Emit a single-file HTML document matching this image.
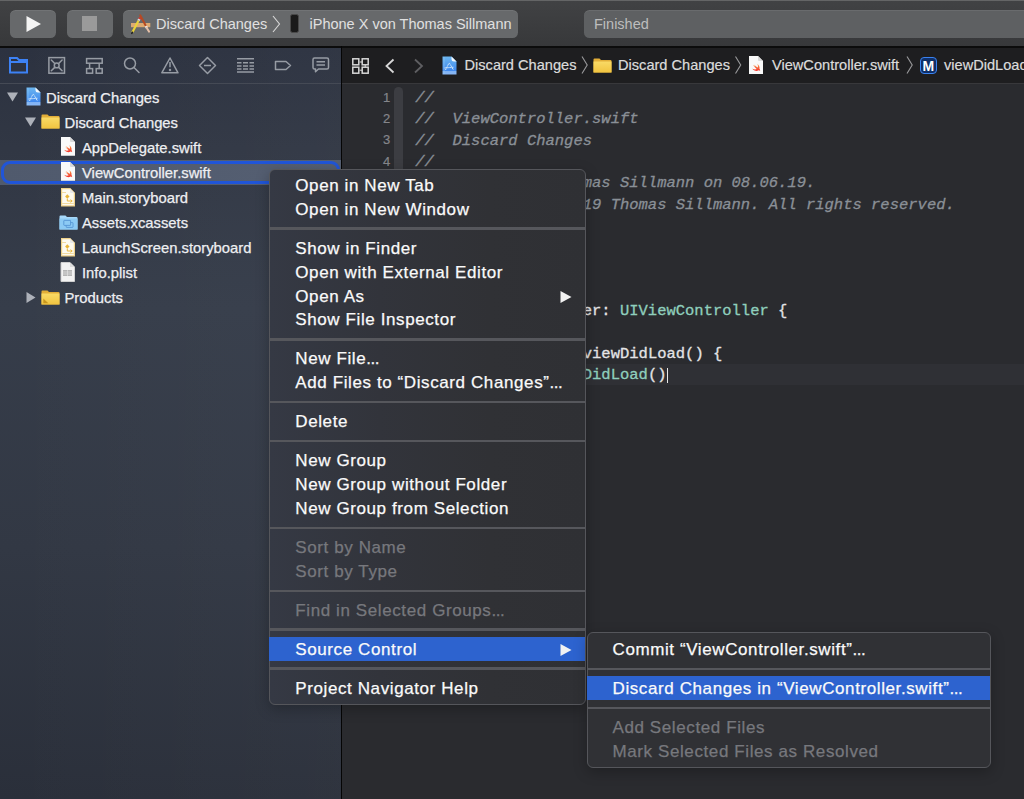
<!DOCTYPE html>
<html><head><meta charset="utf-8">
<style>
*{margin:0;padding:0;box-sizing:border-box}
html,body{width:1024px;height:799px;overflow:hidden;background:#2a2b2f;font-family:"Liberation Sans",sans-serif}
.abs{position:absolute}
#toolbar{left:0;top:0;width:1024px;height:47px;background:linear-gradient(#414244,#37383a)}
#toolbar .topline{left:0;top:0;width:1024px;height:1px;background:#646566}
#tbborder{left:0;top:46.4px;width:1024px;height:1.6px;background:#0c0c0c}
.btn{background:#67696b;border-radius:5.5px;box-shadow:inset 0 1px 0 rgba(255,255,255,0.07)}
#sidebar{left:0;top:48px;width:341px;height:751px;background:linear-gradient(90deg,rgba(255,255,255,0),rgba(255,255,255,0.025)),linear-gradient(180deg,#2c3240 0px,#313744 100px,#363d4a 260px,#323844 500px,#2a2f3a 751px)}
#sbsep{left:0;top:83px;width:341px;height:1px;background:#454a55}
#vsep{left:341px;top:46px;width:1.4px;height:753px;background:#050505}
#jumpbar{left:342px;top:48px;width:682px;height:35px;background:#1e1e20}
#jbsep{left:342px;top:83px;width:682px;height:1px;background:#38383b}
#editor{left:342px;top:84px;width:682px;height:715px;background:#2a2b2f}
.row{position:absolute;height:25px;font-size:14.8px;color:#eeeff2;line-height:25px;white-space:nowrap;margin-top:1.7px;-webkit-text-stroke:0.25px #eeeff2}
.tb{font-size:14.5px;color:#e0e0e0;white-space:nowrap;position:absolute;line-height:20px;margin-top:0.7px}
.code{position:absolute;font-family:"Liberation Mono",monospace;font-size:15.5px;white-space:pre;line-height:21px}
.cm{color:#8a9097;font-style:italic}
.ln{position:absolute;font-family:"Liberation Sans",sans-serif;font-size:13px;color:#85868b;line-height:21px;text-align:right;width:30px;-webkit-text-stroke:0.2px #85868b}
.menu{position:absolute;background:#313338;border:1px solid #55565b;border-radius:6px;box-shadow:0 4px 14px rgba(0,0,0,.25)}
.mi{position:absolute;-webkit-text-stroke:0.25px currentColor;height:24px;font-size:17px;letter-spacing:.6px;color:#fafafa;line-height:24px;white-space:nowrap;padding-left:26.3px;padding-top:0.5px}
.mi.dis{color:#77787d}
.mi.hl{background:#2d63cf}
.msep{position:absolute;height:2.4px;background:#56575c}
.jb{position:absolute;top:55px;font-size:14.6px;line-height:20px;color:#dcdcdc;white-space:nowrap;margin-top:0.4px;-webkit-text-stroke:0.2px #dcdcdc}
.code{color:#e4e4e6;-webkit-text-stroke:0.3px currentColor}
.kw{color:#fc5fa3;font-weight:bold}
.ty{color:#8fcfbd}
</style></head><body><svg width="0" height="0" style="position:absolute"><defs><linearGradient id="fold" x1="0" y1="0" x2="0" y2="1"><stop offset="0" stop-color="#f9da66"/><stop offset="1" stop-color="#f1c440"/></linearGradient></defs></svg>
<div id="toolbar" class="abs"><div class="topline abs"></div></div>
<div id="tbborder" class="abs"></div>
<div class="abs btn" style="left:10px;top:10px;width:46px;height:27.5px"></div>
<svg class="abs" style="left:25px;top:15px" width="18" height="18" viewBox="0 0 18 18"><path d="M1.5 1 L16 9 L1.5 17 Z" fill="#f4f4f4"/></svg>
<div class="abs btn" style="left:67px;top:10px;width:46px;height:27.5px"></div>
<div class="abs" style="left:82px;top:16px;width:15px;height:15px;background:#9a9a9a"></div>
<div class="abs btn" style="left:123px;top:10px;width:395px;height:27.5px"></div>
<svg class="abs" style="left:126px;top:10px" width="30" height="27" viewBox="0 0 30 27">
 <rect x="5" y="13" width="19.3" height="4.2" fill="#dcaa72"/>
 <path d="M14.2 5.3 L19.9 16" stroke="#b54a22" stroke-width="2.0" stroke-linecap="round"/>
 <path d="M19.9 16 L20.8 17.9" stroke="#e8e8e8" stroke-width="2.4"/>
 <path d="M20.8 17.9 L23 21.6" stroke="#e6c0a8" stroke-width="2.0" stroke-linecap="round"/>
 <path d="M6.4 22.3 L12.6 10.5" stroke="#e9d23a" stroke-width="2.2"/>
 <path d="M12.6 10.5 L13.4 9" stroke="#dcdcdc" stroke-width="2.6"/>
 <path d="M13.4 9 L14.2 7.6" stroke="#d9342a" stroke-width="2.6"/>
 <path d="M6.4 22.3 L5.8 23.3" stroke="#222" stroke-width="1.6" stroke-linecap="round"/>
</svg>
<div class="tb" style="left:156px;top:13px">Discard Changes</div>
<svg class="abs" style="left:272px;top:15px" width="9" height="18" viewBox="0 0 9 18"><path d="M1 1 L7.5 9 L1 17" fill="none" stroke="#d8d8d8" stroke-width="1.1"/></svg>
<div class="abs" style="left:289.8px;top:14.4px;width:9px;height:18.6px;background:#1a1a1a;border:1px solid #4a4a4a;border-radius:2.5px"></div>
<div class="tb" style="left:309.5px;top:13px">iPhone X von Thomas Sillmann</div>
<div class="abs btn" style="left:584px;top:10px;width:460px;height:27.5px;background:#5e6062"></div>
<div class="tb" style="left:594px;top:13px;color:#bdbdbd">Finished</div>

<div id="sidebar" class="abs"></div>
<div id="sbsep" class="abs"></div>

<svg class="abs" style="left:0;top:48px" width="341" height="35" viewBox="0 48 341 35">
 <g fill="none" stroke="#3d82f5" stroke-width="2">
  <path d="M10 58 H17 L19 60 H27 V72.5 H10 Z"/><path d="M10 62 H27"/>
 </g>
 <g fill="none" stroke="#979ca4" stroke-width="1.5">
  <rect x="48.9" y="57.6" width="15.6" height="15.6"/>
  <circle cx="56.7" cy="65.4" r="2.4"/>
  <path d="M51.3 60 L54.5 63.2 M62.1 60 L58.9 63.2 M51.3 70.8 L54.5 67.6 M62.1 70.8 L58.9 67.6" stroke-linecap="round"/>
  <rect x="86.6" y="58.6" width="15.6" height="4.6"/>
  <rect x="86.6" y="68.6" width="6" height="4.6"/><rect x="96.2" y="68.6" width="6" height="4.6"/>
  <path d="M89.6 63.2 V68.6 M99.2 63.2 V68.6"/>
  <circle cx="130" cy="63.5" r="5.5"/><path d="M134 67.5 L139 72.5" stroke-linecap="round"/>
  <path d="M170 58 L178 72.8 H161.8 Z" stroke-linejoin="round"/>
  <path d="M170 62 V67.3"/><circle cx="170" cy="70" r="0.5" fill="#979ca4"/>
  <path d="M207.5 57.5 L215.5 65.5 L207.5 73.5 L199.5 65.5 Z" stroke-linejoin="round"/>
  <path d="M204 65.5 H211"/>
  <path d="M237 58.8 H254 M237 72 H254 M237 62.8 H241.5 M243 62.8 H248 M249.5 62.8 H254 M237 66 H241.5 M243 66 H248 M249.5 66 H254 M237 69 H241.5 M243 69 H248 M249.5 69 H254"/>
  <path d="M275.5 61.5 H286 L290.5 65.5 L286 69.5 H275.5 Z" stroke-linejoin="round"/>
  <path d="M314.5 58 H327 Q328.5 58 328.5 59.5 V67.5 Q328.5 69 327 69 H318.5 L315.5 71.8 V69 H314.5 Q313 69 313 67.5 V59.5 Q313 58 314.5 58 Z" stroke-linejoin="round"/>
  <path d="M316.5 61.8 H325 M316.5 65 H325"/>
 </g>
</svg>
<div class="abs" style="left:0;top:159.8px;width:341px;height:25px;background:linear-gradient(90deg,#505a6d,#555f72)"></div><div class="abs" style="left:1.2px;top:161px;width:339px;height:23px;border:3px solid #2055d8;border-radius:9px"></div><svg class="abs" style="left:7px;top:92.2px" width="11" height="10" viewBox="0 0 11 10"><path d="M0 0.5 H11 L5.5 9.5 Z" fill="#adb1b9"/></svg><svg class="abs" style="left:25.5px;top:87px" width="15" height="19" viewBox="0 0 15 19">
 <defs><linearGradient id="pg26" x1="0" y1="0" x2="0" y2="1"><stop offset="0" stop-color="#6cb6f0"/><stop offset="0.8" stop-color="#3f88ee"/><stop offset="0.82" stop-color="#80b2f4"/><stop offset="1" stop-color="#8ab8f6"/></linearGradient></defs>
 <path d="M0.5 0.5 H9.5 L14.5 5.5 V18.5 H0.5 Z" fill="url(#pg26)"/><path d="M9.5 0.5 V3 Q9.5 5.5 12 5.5 H14.5 Z" fill="#f4f8fc"/>
 <path d="M2 1 V18" stroke="#9cd0f6" stroke-width="0.8" opacity="0.6"/>
 <path d="M3.5 14 L6.5 8 Q7.3 6.5 8 8 L11.5 14 M2.5 12 L11.8 11.2" fill="none" stroke="#d8ecfc" stroke-width="1" stroke-dasharray="1.4 0.5"/>
</svg><div class="row" style="left:46px;top:84px">Discard Changes</div><svg class="abs" style="left:25px;top:117.2px" width="11" height="10" viewBox="0 0 11 10"><path d="M0 0.5 H11 L5.5 9.5 Z" fill="#adb1b9"/></svg><svg class="abs" style="left:41px;top:114px" width="19" height="15" viewBox="0 0 19 15">
 <path d="M0.5 1.5 Q0.5 0.5 1.5 0.5 H6.5 L8 2 H17.5 Q18.5 2 18.5 3 V14.5 H0.5 Z" fill="#e2ae38"/>
 <path d="M0.5 3.5 H18.5 V14.5 H0.5 Z" fill="url(#fold)"/>
</svg><div class="row" style="left:64.5px;top:109px">Discard Changes</div><svg class="abs" style="left:60.8px;top:137.2px" width="14" height="18.8" viewBox="0 0 14 18.8">
 <defs><linearGradient id="sg1" x1="0" y1="0" x2="0" y2="1"><stop offset="0" stop-color="#f8a04a"/><stop offset="1" stop-color="#f5302a"/></linearGradient></defs>
 <path d="M0 0 H9 L14 5 V18.8 H0 Z" fill="#f9f9f9"/><path d="M9 0 V4 Q9 5 10 5 H14 Z" fill="#d9d9d9"/>
 <g transform="translate(2.1 6.6) scale(0.44)"><path d="M13.543 3.41c4.114 2.47 6.545 7.162 5.549 11.131-.024.093-.05.181-.076.272l.002.001c2.062 2.538 1.5 5.258 1.236 4.745-1.072-2.086-3.066-1.568-4.088-1.043a6.803 6.803 0 0 1-.281.158l-.02.012-.002.002c-2.115 1.123-4.957 1.205-7.812-.022a12.568 12.568 0 0 1-5.64-4.838c.649.48 1.35.902 2.097 1.252 3.019 1.414 6.051 1.311 8.197-.002C9.651 12.73 7.101 9.67 5.146 7.191a10.628 10.628 0 0 1-1.005-1.384c2.34 2.142 6.038 4.83 7.365 5.576C8.69 8.408 6.208 4.743 6.324 4.86c4.436 4.47 8.528 6.996 8.528 6.996.154.085.27.154.36.213.085-.215.16-.437.224-.668.708-2.588-.09-5.548-1.893-7.992z" fill="url(#sg1)"/></g>
</svg><div class="row" style="left:82px;top:134px">AppDelegate.swift</div><svg class="abs" style="left:60.8px;top:162.2px" width="14" height="18.8" viewBox="0 0 14 18.8">
 <defs><linearGradient id="sg2" x1="0" y1="0" x2="0" y2="1"><stop offset="0" stop-color="#f8a04a"/><stop offset="1" stop-color="#f5302a"/></linearGradient></defs>
 <path d="M0 0 H9 L14 5 V18.8 H0 Z" fill="#f9f9f9"/><path d="M9 0 V4 Q9 5 10 5 H14 Z" fill="#d9d9d9"/>
 <g transform="translate(2.1 6.6) scale(0.44)"><path d="M13.543 3.41c4.114 2.47 6.545 7.162 5.549 11.131-.024.093-.05.181-.076.272l.002.001c2.062 2.538 1.5 5.258 1.236 4.745-1.072-2.086-3.066-1.568-4.088-1.043a6.803 6.803 0 0 1-.281.158l-.02.012-.002.002c-2.115 1.123-4.957 1.205-7.812-.022a12.568 12.568 0 0 1-5.64-4.838c.649.48 1.35.902 2.097 1.252 3.019 1.414 6.051 1.311 8.197-.002C9.651 12.73 7.101 9.67 5.146 7.191a10.628 10.628 0 0 1-1.005-1.384c2.34 2.142 6.038 4.83 7.365 5.576C8.69 8.408 6.208 4.743 6.324 4.86c4.436 4.47 8.528 6.996 8.528 6.996.154.085.27.154.36.213.085-.215.16-.437.224-.668.708-2.588-.09-5.548-1.893-7.992z" fill="url(#sg2)"/></g>
</svg><div class="row" style="left:82px;top:159px">ViewController.swift</div><div class="row" style="left:313px;top:159px;font-size:13px;color:#d0d0d0">M</div><svg class="abs" style="left:60.8px;top:188px" width="14" height="18.5" viewBox="0 0 14 18.5">
 <path d="M0.6 0.6 H9 L13.4 5 V17.9 H0.6 Z" fill="#fdfaf0" stroke="#efd28a" stroke-width="1.2"/><path d="M9 0.6 V4 Q9 5 10 5 H13.4 Z" fill="#e8e8e8"/>
 <path d="M1.2 4.5 H5" stroke="#efd28a" stroke-width="0.8"/><path d="M1.2 15.5 H12.8" stroke="#efd28a" stroke-width="0.8"/>
 <path d="M6.3 6.3 L8.5 8.5 L6.3 10.7 L4.1 8.5 Z" fill="#e8b53a"/>
 <path d="M6.3 10.7 V13 H10.5" fill="none" stroke="#e8b53a" stroke-width="1"/><path d="M9.5 11.6 L11.2 13 L9.5 14.4" fill="none" stroke="#e8b53a" stroke-width="1"/>
</svg><div class="row" style="left:82px;top:184px">Main.storyboard</div><svg class="abs" style="left:58.5px;top:215px" width="19" height="15" viewBox="0 0 19 15">
 <path d="M0.5 1.5 Q0.5 0.5 1.5 0.5 H6.5 L8 2 H17.5 Q18.5 2 18.5 3 V14.5 H0.5 Z" fill="#a6d8fa"/>
 <path d="M0.5 3.5 H18.5 V14.5 H0.5 Z" fill="#8ccaf4"/>
 <rect x="7.2" y="7.6" width="6.8" height="4.8" rx="0.5" fill="#8ccaf4" stroke="#4f8fd0" stroke-width="0.8"/><rect x="4.8" y="5.4" width="6.8" height="5" rx="0.5" fill="#8ccaf4" stroke="#4f8fd0" stroke-width="0.8"/>
</svg><div class="row" style="left:82px;top:209px">Assets.xcassets</div><svg class="abs" style="left:60.8px;top:238px" width="14" height="18.5" viewBox="0 0 14 18.5">
 <path d="M0.6 0.6 H9 L13.4 5 V17.9 H0.6 Z" fill="#fdfaf0" stroke="#efd28a" stroke-width="1.2"/><path d="M9 0.6 V4 Q9 5 10 5 H13.4 Z" fill="#e8e8e8"/>
 <path d="M1.2 4.5 H5" stroke="#efd28a" stroke-width="0.8"/><path d="M1.2 15.5 H12.8" stroke="#efd28a" stroke-width="0.8"/>
 <path d="M6.3 6.3 L8.5 8.5 L6.3 10.7 L4.1 8.5 Z" fill="#e8b53a"/>
 <path d="M6.3 10.7 V13 H10.5" fill="none" stroke="#e8b53a" stroke-width="1"/><path d="M9.5 11.6 L11.2 13 L9.5 14.4" fill="none" stroke="#e8b53a" stroke-width="1"/>
</svg><div class="row" style="left:82px;top:234px">LaunchScreen.storyboard</div><svg class="abs" style="left:60px;top:262px" width="15" height="20" viewBox="0 0 15 20">
 <path d="M1 0.5 H10 L14.5 5 V19.5 H1 Z" fill="#f2f2f2" stroke="#cfcfcf" stroke-width="1"/><path d="M10 0.5 V5 H14.5" fill="#dcdcdc"/>
 <rect x="3" y="8" width="9" height="6" fill="#b5b5b5"/><path d="M3 10 H12 M3 12 H12 M7.5 8 V14" stroke="#e8e8e8" stroke-width="0.6"/>
</svg><div class="row" style="left:82px;top:259px">Info.plist</div><svg class="abs" style="left:25.7px;top:292px" width="10" height="11" viewBox="0 0 10 11"><path d="M0.5 0 V11 L9.5 5.5 Z" fill="#adb1b9"/></svg><svg class="abs" style="left:41px;top:290px" width="19" height="15" viewBox="0 0 19 15">
 <path d="M0.5 1.5 Q0.5 0.5 1.5 0.5 H6.5 L8 2 H17.5 Q18.5 2 18.5 3 V14.5 H0.5 Z" fill="#e2ae38"/>
 <path d="M0.5 3.5 H18.5 V14.5 H0.5 Z" fill="url(#fold)"/>
 <path d="M2.3 8.5 L2.3 13.2 L7.3 13.2 Z" fill="#c8961e"/>
</svg><div class="row" style="left:64.5px;top:284px">Products</div><div id="vsep" class="abs"></div>
<div id="jumpbar" class="abs"></div>
<div id="jbsep" class="abs"></div>
<div id="editor" class="abs"></div>
<div class="abs" style="left:403px;top:364px;width:621px;height:21px;background:#2f3035"></div><div class="abs" style="left:394px;top:87px;width:9px;height:350px;background:#3c3d42;border-radius:4.5px 4.5px 0 0"></div><div class="ln" style="left:360.3px;top:86.7px">1</div><div class="ln" style="left:360.3px;top:108.0px">2</div><div class="ln" style="left:360.3px;top:129.3px">3</div><div class="ln" style="left:360.3px;top:150.6px">4</div><div class="ln" style="left:360.3px;top:171.9px">5</div><div class="ln" style="left:360.3px;top:193.2px">6</div><div class="ln" style="left:360.3px;top:214.5px">7</div><div class="ln" style="left:360.3px;top:235.8px">8</div><div class="ln" style="left:360.3px;top:257.1px">9</div><div class="ln" style="left:360.3px;top:278.4px">10</div><div class="ln" style="left:360.3px;top:299.7px">11</div><div class="ln" style="left:360.3px;top:321.0px">12</div><div class="ln" style="left:360.3px;top:342.3px">13</div><div class="ln" style="left:360.3px;top:363.6px">14</div><div class="code" style="left:415.3px;top:88.0px"><span class="cm">//</span></div><div class="code" style="left:415.3px;top:109.3px"><span class="cm">//  ViewController.swift</span></div><div class="code" style="left:415.3px;top:130.6px"><span class="cm">//  Discard Changes</span></div><div class="code" style="left:415.3px;top:151.9px"><span class="cm">//</span></div><div class="code" style="left:415.3px;top:173.2px"><span class="cm">//  Created by Thomas Sillmann on 08.06.19.</span></div><div class="code" style="left:415.3px;top:194.5px"><span class="cm">//  Copyright © 2019 Thomas Sillmann. All rights reserved.</span></div><div class="code" style="left:415.3px;top:215.8px"><span class="cm">//</span></div><div class="code" style="left:415.3px;top:258.4px"><span class="kw">import</span> UIKit</div><div class="code" style="left:415.3px;top:301.0px"><span class="kw">class</span> ViewController: <span class="ty">UIViewController</span> {</div><div class="code" style="left:415.3px;top:343.6px">    <span class="kw">override</span> <span class="kw">func</span> viewDidLoad() {</div><div class="code" style="left:415.3px;top:364.9px">        <span class="kw">super</span>.<span class="ty">viewDidLoad</span>()</div><div class="abs" style="left:666.5px;top:367.5px;width:1.3px;height:15.5px;background:#e8e8e8"></div><svg class="abs" style="left:342px;top:48px" width="682" height="35" viewBox="342 48 682 35">
 <g fill="none" stroke="#d8d8d8" stroke-width="1.5">
  <rect x="352.8" y="58.8" width="6" height="6"/><rect x="362.2" y="58.8" width="6" height="6"/>
  <rect x="352.8" y="67.2" width="6" height="6"/><rect x="362.2" y="67.2" width="6" height="6"/>
  <path d="M359.6 62 H362" stroke-width="1"/><path d="M365.2 64.8 V67.2" stroke-width="1"/><path d="M359.6 70.2 H362" stroke-width="1"/>
  <path d="M393.5 59.5 L386.5 66 L393.5 72.5" stroke-width="1.8"/>
  <path d="M415 59.5 L422 66 L415 72.5" stroke="#5f5f62" stroke-width="1.8"/>
  <path d="M582 56.5 L587.2 65 L582 73.5" stroke="#9a9a9c" stroke-width="1.1"/>
  <path d="M735.5 56.5 L740.7 65 L735.5 73.5" stroke="#9a9a9c" stroke-width="1.1"/>
  <path d="M907 56.5 L912.2 65 L907 73.5" stroke="#9a9a9c" stroke-width="1.1"/>
 </g>
</svg>
<svg class="abs" style="left:441.5px;top:56px" width="15" height="19" viewBox="0 0 15 19">
 <defs><linearGradient id="pg442" x1="0" y1="0" x2="0" y2="1"><stop offset="0" stop-color="#6cb6f0"/><stop offset="0.8" stop-color="#3f88ee"/><stop offset="0.82" stop-color="#80b2f4"/><stop offset="1" stop-color="#8ab8f6"/></linearGradient></defs>
 <path d="M0.5 0.5 H9.5 L14.5 5.5 V18.5 H0.5 Z" fill="url(#pg442)"/><path d="M9.5 0.5 V3 Q9.5 5.5 12 5.5 H14.5 Z" fill="#f4f8fc"/>
 <path d="M2 1 V18" stroke="#9cd0f6" stroke-width="0.8" opacity="0.6"/>
 <path d="M3.5 14 L6.5 8 Q7.3 6.5 8 8 L11.5 14 M2.5 12 L11.8 11.2" fill="none" stroke="#d8ecfc" stroke-width="1" stroke-dasharray="1.4 0.5"/>
</svg><div class="jb" style="left:464.5px">Discard Changes</div><svg class="abs" style="left:593px;top:58px" width="19" height="15" viewBox="0 0 19 15">
 <path d="M0.5 1.5 Q0.5 0.5 1.5 0.5 H6.5 L8 2 H17.5 Q18.5 2 18.5 3 V14.5 H0.5 Z" fill="#e2ae38"/>
 <path d="M0.5 3.5 H18.5 V14.5 H0.5 Z" fill="url(#fold)"/>
</svg><div class="jb" style="left:618px">Discard Changes</div><svg class="abs" style="left:748.8px;top:55.8px" width="14" height="18.3" viewBox="0 0 14 18.3">
 <defs><linearGradient id="sg3" x1="0" y1="0" x2="0" y2="1"><stop offset="0" stop-color="#f8a04a"/><stop offset="1" stop-color="#f5302a"/></linearGradient></defs>
 <path d="M0 0 H9 L14 5 V18.3 H0 Z" fill="#f9f9f9"/><path d="M9 0 V4 Q9 5 10 5 H14 Z" fill="#d9d9d9"/>
 <g transform="translate(2.1 6.3) scale(0.44)"><path d="M13.543 3.41c4.114 2.47 6.545 7.162 5.549 11.131-.024.093-.05.181-.076.272l.002.001c2.062 2.538 1.5 5.258 1.236 4.745-1.072-2.086-3.066-1.568-4.088-1.043a6.803 6.803 0 0 1-.281.158l-.02.012-.002.002c-2.115 1.123-4.957 1.205-7.812-.022a12.568 12.568 0 0 1-5.64-4.838c.649.48 1.35.902 2.097 1.252 3.019 1.414 6.051 1.311 8.197-.002C9.651 12.73 7.101 9.67 5.146 7.191a10.628 10.628 0 0 1-1.005-1.384c2.34 2.142 6.038 4.83 7.365 5.576C8.69 8.408 6.208 4.743 6.324 4.86c4.436 4.47 8.528 6.996 8.528 6.996.154.085.27.154.36.213.085-.215.16-.437.224-.668.708-2.588-.09-5.548-1.893-7.992z" fill="url(#sg3)"/></g>
</svg><div class="jb" style="left:772px">ViewController.swift</div><div class="abs" style="left:919.5px;top:56.6px;width:17.6px;height:17.5px;border-radius:4px;background:#0f2f68;border:1.6px solid #3a82f0"></div><div class="abs" style="left:919.5px;top:56.6px;width:17.6px;height:17.5px;font-size:14px;font-weight:bold;color:#fff;text-align:center;line-height:18px">M</div><div class="jb" style="left:944px">viewDidLoad()</div>
<div class="menu" style="left:268.5px;top:169px;width:317px;height:536px;background:linear-gradient(90deg,#353944 0%,#32343b 35%,#303135 70%,#2f3034 100%)"></div><div class="mi " style="left:269px;width:316px;top:173.25px">Open in New Tab</div><div class="mi " style="left:269px;width:316px;top:197.20px">Open in New Window</div><div class="msep" style="left:269px;width:316px;top:227.42px"></div><div class="mi " style="left:269px;width:316px;top:236.10px">Show in Finder</div><div class="mi " style="left:269px;width:316px;top:260.05px">Open with External Editor</div><div class="mi " style="left:269px;width:316px;top:284.00px">Open As</div><svg class="abs" style="left:559.5px;top:290.50px" width="12" height="12" viewBox="0 0 12 12"><path d="M0.5 0 L11.5 6 L0.5 12 Z" fill="#f2f2f2"/></svg><div class="mi " style="left:269px;width:316px;top:307.95px">Show File Inspector</div><div class="msep" style="left:269px;width:316px;top:338.17px"></div><div class="mi " style="left:269px;width:316px;top:346.85px">New File<span style="letter-spacing:-0.5px">...</span></div><div class="mi " style="left:269px;width:316px;top:370.80px">Add Files to “Discard Changes”<span style="letter-spacing:-0.5px">...</span></div><div class="msep" style="left:269px;width:316px;top:401.02px"></div><div class="mi " style="left:269px;width:316px;top:409.70px">Delete</div><div class="msep" style="left:269px;width:316px;top:439.92px"></div><div class="mi " style="left:269px;width:316px;top:448.60px">New Group</div><div class="mi " style="left:269px;width:316px;top:472.55px">New Group without Folder</div><div class="mi " style="left:269px;width:316px;top:496.50px">New Group from Selection</div><div class="msep" style="left:269px;width:316px;top:526.72px"></div><div class="mi dis" style="left:269px;width:316px;top:535.40px">Sort by Name</div><div class="mi dis" style="left:269px;width:316px;top:559.35px">Sort by Type</div><div class="msep" style="left:269px;width:316px;top:589.57px"></div><div class="mi dis" style="left:269px;width:316px;top:598.25px">Find in Selected Groups<span style="letter-spacing:-0.5px">...</span></div><div class="msep" style="left:269px;width:316px;top:628.48px"></div><div class="mi hl " style="left:269px;width:316px;top:637.15px">Source Control</div><svg class="abs" style="left:559.5px;top:643.65px" width="12" height="12" viewBox="0 0 12 12"><path d="M0.5 0 L11.5 6 L0.5 12 Z" fill="#f2f2f2"/></svg><div class="msep" style="left:269px;width:316px;top:667.38px"></div><div class="mi " style="left:269px;width:316px;top:676.05px">Project Navigator Help</div><div class="menu" style="left:586.5px;top:632.4px;width:404px;height:136px;background:#303135"></div><div class="mi " style="left:587px;padding-left:25.5px;width:403px;top:637.40px">Commit “ViewController.swift”<span style="letter-spacing:-0.5px">...</span></div><div class="msep" style="left:587px;width:403px;top:667.62px"></div><div class="mi hl" style="left:587px;padding-left:25.5px;width:403px;top:676.30px">Discard Changes in “ViewController.swift”<span style="letter-spacing:-0.5px">...</span></div><div class="msep" style="left:587px;width:403px;top:706.53px"></div><div class="mi dis" style="left:587px;padding-left:25.5px;width:403px;top:715.20px">Add Selected Files</div><div class="mi dis" style="left:587px;padding-left:25.5px;width:403px;top:739.15px">Mark Selected Files as Resolved</div>
</body></html>
